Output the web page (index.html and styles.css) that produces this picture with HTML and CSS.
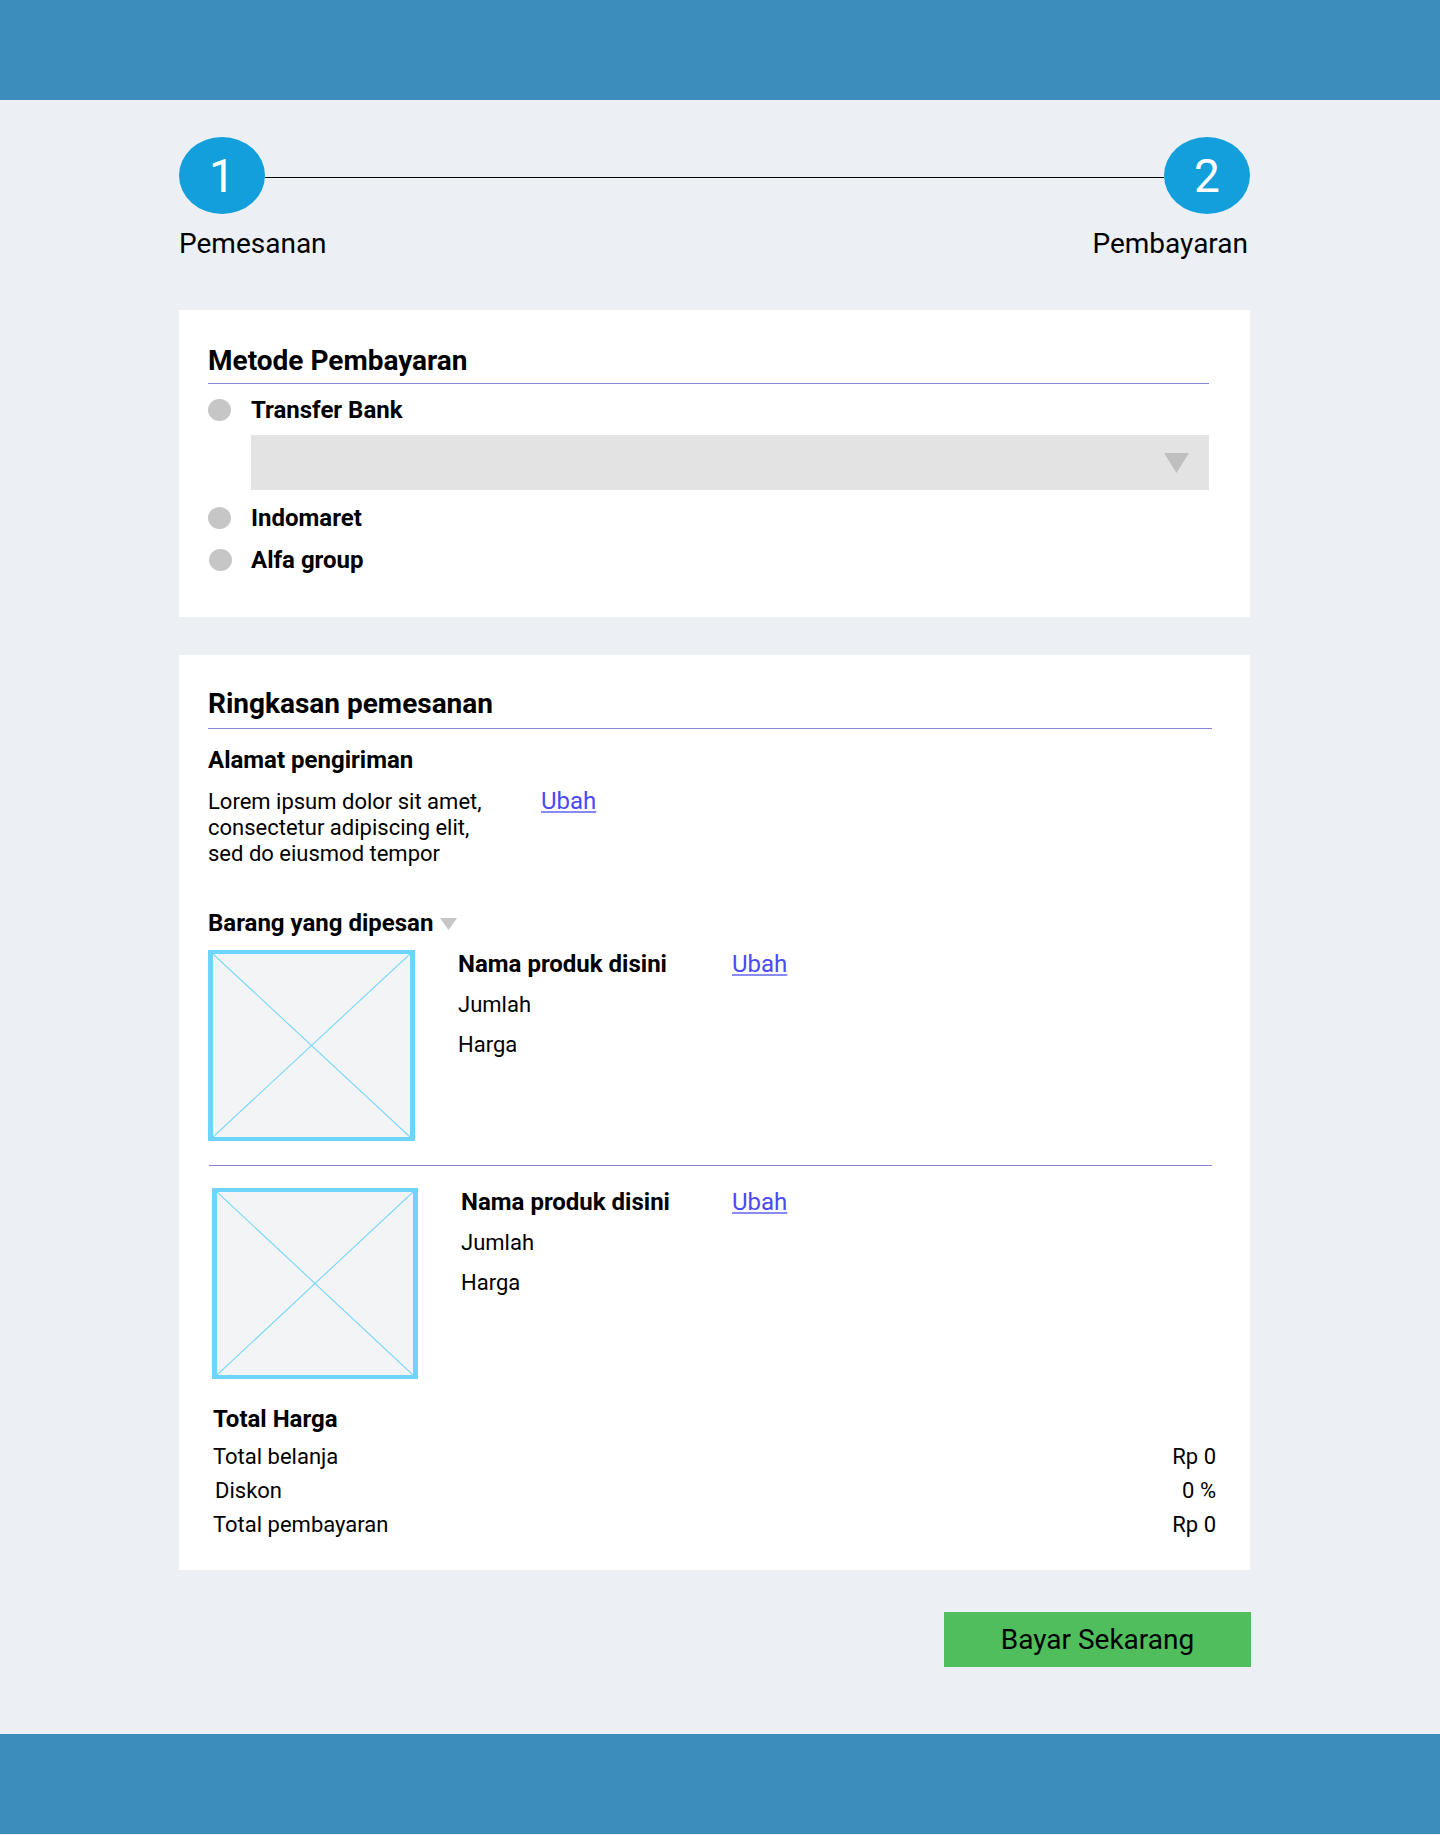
FILE: index.html
```html
<!DOCTYPE html>
<html lang="id">
<head>
<meta charset="utf-8">
<title>Pembayaran</title>
<link rel="stylesheet" href="styles.css">
</head>
<body>
<header class="topbar"></header>

<main class="page">
  <div class="stepper">
    <div class="step-track">
      <div class="step-dot">1</div>
      <div class="step-line"></div>
      <div class="step-dot">2</div>
    </div>
    <div class="step-labels">
      <span>Pemesanan</span>
      <span>Pembayaran</span>
    </div>
  </div>

  <section class="card card-pay">
    <h2 class="card-title">Metode Pembayaran</h2>
    <div class="rule rule-pay"></div>
    <div class="option option-first"><span class="radio"></span><span>Transfer Bank</span></div>
    <div class="select">
      <svg class="select-caret" width="25" height="20" viewBox="0 0 25 20"><polygon points="0,0 25,0 12.5,20" fill="#bfbfbf"/></svg>
    </div>
    <div class="option option-next"><span class="radio"></span><span>Indomaret</span></div>
    <div class="option option-next"><span class="radio radio-shift"></span><span>Alfa group</span></div>
  </section>

  <section class="card card-summary">
    <h2 class="card-title">Ringkasan pemesanan</h2>
    <div class="rule rule-summary"></div>

    <h3 class="sub-title sub-address">Alamat pengiriman</h3>
    <div class="address">
      <p class="address-text">Lorem ipsum dolor sit amet,<br>consectetur adipiscing elit,<br>sed do eiusmod tempor</p>
      <a class="link" href="#">Ubah</a>
    </div>

    <h3 class="sub-title sub-items">Barang yang dipesan
      <svg class="sub-caret" width="17" height="12" viewBox="0 0 17 12"><polygon points="0,0 17,0 8.5,12" fill="#c6c6c6"/></svg>
    </h3>

    <div class="item item-first">
      <div class="thumb">
        <svg width="100%" height="100%" viewBox="0 0 100 100" preserveAspectRatio="none"><line x1="0" y1="0" x2="100" y2="100" stroke="#6dd4fc" stroke-width="1" vector-effect="non-scaling-stroke"/><line x1="100" y1="0" x2="0" y2="100" stroke="#6dd4fc" stroke-width="1" vector-effect="non-scaling-stroke"/></svg>
      </div>
      <div class="item-info">
        <div class="item-name">Nama produk disini</div>
        <div class="item-row">Jumlah</div>
        <div class="item-row">Harga</div>
      </div>
      <a class="link" href="#">Ubah</a>
    </div>

    <div class="rule rule-item"></div>

    <div class="item item-second">
      <div class="thumb">
        <svg width="100%" height="100%" viewBox="0 0 100 100" preserveAspectRatio="none"><line x1="0" y1="0" x2="100" y2="100" stroke="#6dd4fc" stroke-width="1" vector-effect="non-scaling-stroke"/><line x1="100" y1="0" x2="0" y2="100" stroke="#6dd4fc" stroke-width="1" vector-effect="non-scaling-stroke"/></svg>
      </div>
      <div class="item-info">
        <div class="item-name">Nama produk disini</div>
        <div class="item-row">Jumlah</div>
        <div class="item-row">Harga</div>
      </div>
      <a class="link" href="#">Ubah</a>
    </div>

    <div class="totals">
      <h3 class="sub-title">Total Harga</h3>
      <div class="total-row"><span>Total belanja</span><span>Rp 0</span></div>
      <div class="total-row"><span class="total-indent">Diskon</span><span>0 %</span></div>
      <div class="total-row"><span>Total pembayaran</span><span>Rp 0</span></div>
    </div>
  </section>

  <div class="actions">
    <button class="pay-btn" type="button">Bayar Sekarang</button>
  </div>
</main>

<footer class="bottombar"></footer>
</body>
</html>
```

FILE: styles.css
```css
* { box-sizing: border-box; }

body {
  margin: 0;
  background: #ecf0f5;
  font-family: Roboto, "Noto Sans", "Liberation Sans", sans-serif;
  color: #000;
}

.topbar, .bottombar {
  height: 100px;
  background: #3c8dbc;
}

.page {
  width: 1071px;
  margin-left: 179px;
  padding-top: 37px;
  padding-bottom: 67px;
}

/* stepper */
.step-track {
  display: flex;
  align-items: center;
}
.step-dot {
  width: 86px;
  height: 77px;
  border-radius: 50%;
  background: #129fdc;
  color: #fff;
  font-size: 46px;
  line-height: 1;
  display: flex;
  align-items: center;
  justify-content: center;
}
.step-line {
  flex: 1;
  height: 1px;
  margin-top: 3px;
  background: #000;
}
.step-labels {
  display: flex;
  justify-content: space-between;
  margin-top: 14px;
  padding-right: 2px;
  font-size: 28px;
  line-height: 32px;
}

/* cards */
.card {
  background: #fff;
}
.card-title {
  margin: 0;
  font-size: 28px;
  font-weight: 700;
  line-height: 33px;
}
.rule {
  height: 1px;
  background: #8683d8;
}
.rule-pay { margin-top: 6px; }
.rule-summary { margin-top: 8px; }

.card-pay {
  margin-top: 50px;
  padding: 34px 41px 43px 29px;
}
.option {
  display: flex;
  align-items: center;
  gap: 20px;
  font-size: 24px;
  font-weight: 700;
  line-height: 28px;
}
.option-first { margin-top: 12px; }
.option-next { margin-top: 14px; }
.radio {
  width: 23px;
  height: 22px;
  border-radius: 50%;
  background: #c6c6c6;
  flex: none;
}
.radio-shift { margin-left: 1px; margin-right: -1px; }
.select {
  margin: 11px 0 0 43px;
  height: 55px;
  background: #e3e3e3;
  display: flex;
  justify-content: flex-end;
  align-items: center;
  padding-right: 20px;
}

.card-summary {
  margin-top: 38px;
  padding: 32px 38px 28px 29px;
}
.sub-title {
  margin: 0;
  font-size: 24px;
  font-weight: 700;
  line-height: 28px;
}
.sub-address { margin-top: 17px; }
.address {
  display: flex;
  align-items: baseline;
  margin-top: 13px;
}
.address-text {
  margin: 0;
  width: 333px;
  font-size: 22px;
  line-height: 26px;
}
.link {
  color: #4a4af4;
  font-size: 24px;
  line-height: 28px;
  text-decoration: underline;
  text-decoration-color: #8a8af6;
}
.sub-items {
  margin-top: 42px;
  display: flex;
  align-items: center;
  gap: 7px;
}
.sub-caret { margin-top: 2px; }

.item {
  display: flex;
  align-items: flex-start;
}
.item-first { margin-top: 13px; }
.item-second {
  margin-top: 22px;
  padding-left: 4px;
}
.thumb {
  width: 207px;
  height: 191px;
  border-style: solid;
  border-color: #6dd4fc;
  border-width: 4px 5px;
  background: #f3f4f6;
  flex: none;
}
.thumb svg { display: block; }
.item-second .thumb { width: 206px; }
.item-info {
  margin-left: 43px;
  width: 274px;
  font-size: 22px;
  line-height: 26px;
}
.item-second .item-info { width: 271px; }
.item-name {
  font-weight: 700;
  font-size: 24px;
  line-height: 28px;
}
.item-row { margin-top: 14px; }
.rule-item { margin-top: 24px; margin-left: 1px; }

.totals {
  margin: 26px -4px 0 5px;
}
.total-row {
  display: flex;
  justify-content: space-between;
  font-size: 22px;
  line-height: 34px;
}
.totals .sub-title + .total-row { margin-top: 7px; }
.total-indent { padding-left: 2px; }

.actions {
  display: flex;
  justify-content: flex-end;
  margin-top: 42px;
  margin-right: -1px;
}
.pay-btn {
  width: 307px;
  height: 55px;
  border: none;
  background: #50be5c;
  color: #000;
  font-family: inherit;
  font-size: 28px;
  padding: 0;
  cursor: pointer;
}
```
